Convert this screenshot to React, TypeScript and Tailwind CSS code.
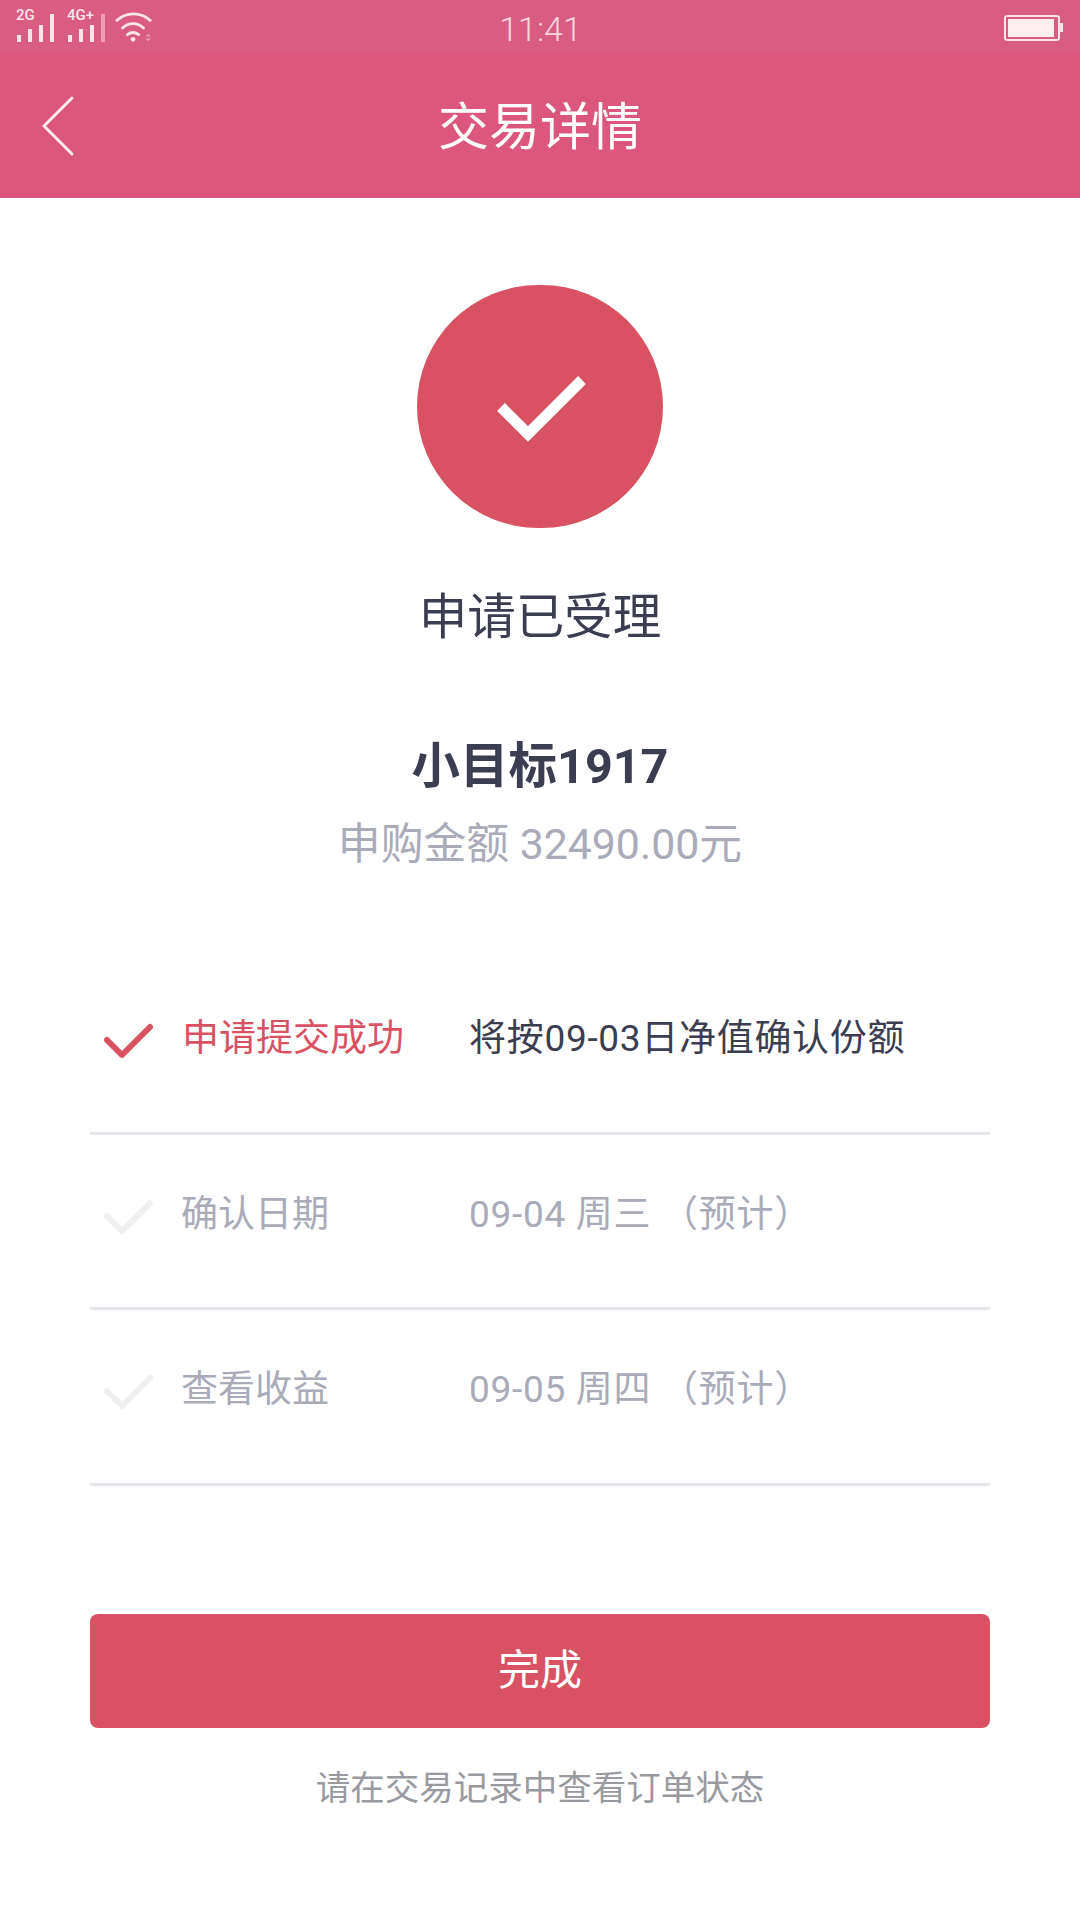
import React from 'react';

const cjk = { fontFamily: '"Noto Sans CJK SC", Roboto, sans-serif' };

function SmallCheck({ color }: { color: string }) {
  return (
    <svg width="50" height="38" viewBox="0 0 50 38" fill="none">
      <path d="M3 17 L18 32 L46 4" stroke={color} strokeWidth="6" strokeLinecap="round" strokeLinejoin="round" />
    </svg>
  );
}

function Signal({ label, dim }: { label: string; dim?: boolean }) {
  return (
    <div className="relative w-[40px] h-[30px]">
      <span className="absolute left-[-1px] top-[-5px] text-[15px] leading-[16px] font-medium text-[#fde3ea]" style={{ fontFamily: 'Roboto, sans-serif' }}>
        {label}
      </span>
      <div className="absolute inset-0 flex items-end gap-[7px]">
        <div className="w-[4px] h-[7px] bg-[#fde3ea]" />
        <div className="w-[4px] h-[13px] bg-[#fde3ea]" />
        <div className="w-[4px] h-[17px] bg-[#fde3ea]" />
        <div className={dim ? 'w-[4px] h-[28px] bg-[#ee9db5]' : 'w-[4px] h-[28px] bg-[#fde3ea]'} />
      </div>
    </div>
  );
}

function Row({ checked, label, value }: { checked?: boolean; label: string; value: string }) {
  return (
    <div className="h-[175.5px] border-b-[3px] border-[#e5e6ec] flex items-start">
      <div className="w-[91px] pl-[14px] pt-[64px] shrink-0">
        <SmallCheck color={checked ? '#d95263' : '#eeeff1'} />
      </div>
      <div className={checked ? 'w-[288px] pl-[1px] pt-[54px] text-[37px] leading-[52px] text-[#d95263] shrink-0' : 'w-[288px] pt-[54px] text-[37px] leading-[52px] text-[#a9abb9] shrink-0'}>
        {label}
      </div>
      <div className={checked ? 'pt-[54px] text-[37px] leading-[52px] tracking-[0.7px] text-[#3b3d50] whitespace-nowrap' : 'pt-[54px] text-[37px] leading-[52px] tracking-[0.7px] text-[#a9abb9] whitespace-nowrap'}>
        {value}
      </div>
    </div>
  );
}

export default function App() {
  return (
    <div className="w-[1080px] h-[1920px] bg-white flex flex-col items-center" style={cjk}>
      <div className="w-full h-[52px] bg-[#d95c82] grid grid-cols-3 items-center pl-[17px] pr-[16px]">
        <div className="flex items-center gap-[11px] pb-[2px]">
          <Signal label="2G" />
          <Signal label="4G+" dim />
          <svg width="38" height="32" viewBox="0 0 40 32" fill="none" className="ml-[-4px]">
            <path d="M2 9 C12 0 27 0 37 9" stroke="#fde3ea" strokeWidth="3" strokeLinecap="round" />
            <path d="M8 17 C14 11 24 11 30 17" stroke="#fde3ea" strokeWidth="3" strokeLinecap="round" />
            <path d="M13 24 C17 21 21 21 25 24" stroke="#fde3ea" strokeWidth="3" strokeLinecap="round" />
            <circle cx="19" cy="29" r="2.5" fill="#fde3ea" />
            <path d="M32 26 L35 23 L38 26 Z M32 28 L38 28 L35 31 Z" fill="#ee9db5" />
          </svg>
        </div>
        <span className="text-[34px] font-light text-center text-[#fbd5e0] pt-[4px]" style={{ fontFamily: 'Roboto, sans-serif' }}>11:41</span>
        <div className="flex justify-end">
          <svg width="60" height="28" viewBox="0 0 60 28" fill="none">
            <rect x="1" y="2" width="54" height="24" rx="2" stroke="#fde3ea" strokeWidth="2" />
            <rect x="4" y="5" width="46" height="18" fill="#fdeef2" />
            <rect x="56" y="9" width="3" height="9" fill="#fde3ea" />
          </svg>
        </div>
      </div>

      <div className="relative w-full h-[146px] bg-[#db577d] flex items-center justify-center">
        <svg className="absolute left-[41px] top-[43px]" width="34" height="62" viewBox="0 0 34 62" fill="none">
          <path d="M31 3 L3 31 L31 59" stroke="#fdeaf0" strokeWidth="3" strokeLinecap="round" strokeLinejoin="round" />
        </svg>
        <span className="text-[51px] leading-[60px] text-white pb-[5px]">交易详情</span>
      </div>

      <div className="mt-[87px] w-[246px] h-[243px] rounded-full bg-[#d95263] flex items-center justify-center">
        <svg width="90" height="70" viewBox="0 0 90 70" fill="none" className="ml-[4px] mt-[4px]">
          <path d="M4 33 L31 60 L85 6" stroke="white" strokeWidth="11" />
        </svg>
      </div>

      <div className="mt-[49px] text-[48.5px] leading-[72px] text-[#3b3d50]">申请已受理</div>

      <div className="mt-[83px] text-[48.5px] leading-[70px] font-bold text-[#3b3d50]" style={{ fontFamily: 'Roboto, "Noto Sans CJK SC", sans-serif' }}>小目标1917</div>
      <div className="mt-[12px] text-[42.8px] leading-[60px] text-[#a9abb9]" style={{ fontFamily: 'Roboto, "Noto Sans CJK SC", sans-serif' }}>申购金额 32490.00元</div>

      <div className="mt-[85px] w-[900px] flex flex-col" style={{ fontFamily: 'Roboto, "Noto Sans CJK SC", sans-serif' }}>
        <Row checked label="申请提交成功" value="将按09-03日净值确认份额" />
        <Row label="确认日期" value="09-04 周三 （预计）" />
        <Row label="查看收益" value="09-05 周四 （预计）" />
      </div>

      <button className="mt-[128px] w-[900px] h-[114px] rounded-[8px] bg-[#d95263] text-white text-[42px] pb-[9px]">完成</button>
      <div className="mt-[32px] text-[34.5px] leading-[50px] text-[#999aa0]">请在交易记录中查看订单状态</div>
    </div>
  );
}
